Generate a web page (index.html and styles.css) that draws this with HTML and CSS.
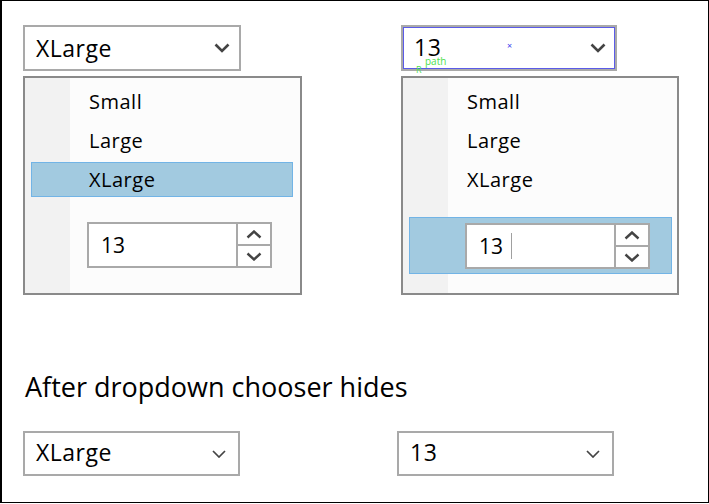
FILE: index.html
```html
<!DOCTYPE html>
<html>
<head>
<meta charset="utf-8">
<link rel="stylesheet" href="styles.css">
</head>
<body>
<div class="frame">
  <div class="top-row">
    <div class="col">
      <div class="combo">
        <span class="combo-text">XLarge</span>
        <svg class="chev" width="16" height="10" viewBox="0 0 16 10"><path d="M1.5 1.5 L8 8 L14.5 1.5" fill="none" stroke="#444" stroke-width="2.6"/></svg>
      </div>
      <div class="popup">
        <div class="item">Small</div>
        <div class="item">Large</div>
        <div class="item selected">XLarge</div>
        <div class="spin-row">
          <div class="spinner">
            <div class="spin-field">13</div>
            <div class="spin-btns">
              <div class="spin-btn"><svg width="16" height="9" viewBox="0 0 16 9"><path d="M1.5 7.5 L8 1.5 L14.5 7.5" fill="none" stroke="#444" stroke-width="2.4"/></svg></div>
              <div class="spin-btn"><svg width="16" height="9" viewBox="0 0 16 9"><path d="M1.5 1.5 L8 7.5 L14.5 1.5" fill="none" stroke="#444" stroke-width="2.4"/></svg></div>
            </div>
          </div>
        </div>
      </div>
    </div>
    <div class="col">
      <div class="combo focused">
        <span class="combo-text">13</span>
        <svg class="chev" width="16" height="10" viewBox="0 0 16 10"><path d="M1.5 1.5 L8 8 L14.5 1.5" fill="none" stroke="#444" stroke-width="2.6"/></svg>
        <span class="dbg-x">×</span>
        <span class="dbg-r">R</span>
      </div>
      <div class="dbg-path">path</div>
      <div class="popup">
        <div class="item">Small</div>
        <div class="item">Large</div>
        <div class="item">XLarge</div>
        <div class="spin-row selected">
          <div class="spinner">
            <div class="spin-field">13<span class="caret"></span></div>
            <div class="spin-btns">
              <div class="spin-btn"><svg width="16" height="9" viewBox="0 0 16 9"><path d="M1.5 7.5 L8 1.5 L14.5 7.5" fill="none" stroke="#444" stroke-width="2.4"/></svg></div>
              <div class="spin-btn"><svg width="16" height="9" viewBox="0 0 16 9"><path d="M1.5 1.5 L8 7.5 L14.5 1.5" fill="none" stroke="#444" stroke-width="2.4"/></svg></div>
            </div>
          </div>
        </div>
      </div>
    </div>
  </div>
  <h1 class="heading">After dropdown chooser hides</h1>
  <div class="bottom-row">
    <div class="combo plain">
      <span class="combo-text">XLarge</span>
      <svg class="chev small" width="14" height="8" viewBox="0 0 14 8"><path d="M1 1 L7 7 L13 1" fill="none" stroke="#444" stroke-width="1.7"/></svg>
    </div>
    <div class="combo plain">
      <span class="combo-text">13</span>
      <svg class="chev small" width="14" height="8" viewBox="0 0 14 8"><path d="M1 1 L7 7 L13 1" fill="none" stroke="#444" stroke-width="1.7"/></svg>
    </div>
  </div>
</div>
</body>
</html>
```

FILE: styles.css
```css
* { box-sizing: border-box; }
html, body { margin: 0; padding: 0; background: #fff; }
body { font-family: "Open Sans", "Noto Sans", sans-serif; color: #000; }

.frame {
  width: 709px;
  height: 503px;
  border: 1px solid #000;
  border-left-width: 2px;
  padding: 24px 0 0 21px;
  background: #fff;
}

.top-row {
  display: flex;
  gap: 99px;
}
.col {
  position: relative;
  display: flex;
  flex-direction: column;
  gap: 5px;
}

.combo {
  position: relative;
  width: 218px;
  height: 46px;
  border: 2px solid #a9a9a9;
  background: #fff;
  display: flex;
  align-items: center;
  justify-content: space-between;
  padding: 0 9px 0 11px;
  font-size: 23px;
}
.col:nth-child(2) .combo { width: 216px; }
.combo.focused { outline: 1px solid #5b5be8; outline-offset: -3px; }
.combo-text { line-height: 1; letter-spacing: 0.5px; }
.focused .combo-text { margin-top: -2px; }
.chev { display: block; }

.dbg-x {
  position: absolute;
  left: 104px;
  top: 12px;
  font-size: 9px;
  color: #3a3aee;
}
.dbg-path {
  position: absolute;
  left: 24px;
  top: 31px;
  font-size: 10px;
  line-height: 10px;
  color: #4de04d;
}
.dbg-r {
  position: absolute;
  left: 13px;
  top: 38px;
  font-size: 9px;
  line-height: 1;
  color: #4de04d;
}

.popup {
  width: 279px;
  height: 219px;
  border: 2px solid #8a8a8a;
  background: linear-gradient(to right, #f2f2f2 0, #f2f2f2 45px, #fcfcfc 45px);
  padding: 6px 7px 0 6px;
  display: flex;
  flex-direction: column;
  gap: 4px;
  font-size: 20px;
}
.col:nth-child(2) .popup { width: 278px; padding-right: 5px; }

.item {
  height: 35px;
  border: 1px solid transparent;
  padding-left: 57px;
  display: flex;
  align-items: center;
  line-height: 1;
  letter-spacing: 0.5px;
}

.spin-row {
  margin-top: 16px;
  height: 57px;
  border: 1px solid transparent;
  padding: 5px 0 0 55px;
}
.col:first-child .spin-row { padding-top: 4px; }

.item.selected,
.spin-row.selected {
  background: #a2cae0;
  border: 1px solid #72b4e6;
}

.spinner {
  width: 185px;
  height: 46px;
  border: 2px solid #a9a9a9;
  background: #fff;
  display: flex;
}
.spin-field {
  flex: 1;
  display: flex;
  align-items: center;
  padding-left: 12px;
  font-size: 21px;
  line-height: 1;
}
.caret {
  display: inline-block;
  width: 1px;
  height: 26px;
  background: #a0a0a0;
  margin-left: 8px;
}
.spin-btns {
  width: 34px;
  border-left: 2px solid #a9a9a9;
  display: flex;
  flex-direction: column;
}
.spin-btn {
  flex: 1;
  display: flex;
  align-items: center;
  justify-content: center;
}
.spin-btn + .spin-btn { border-top: 2px solid #a9a9a9; }
.spin-btn svg { display: block; }

.heading {
  margin: 74px 0 0 2px;
  font-weight: 400;
  font-size: 27px;
  line-height: 36px;
  letter-spacing: 0;
}

.bottom-row {
  display: flex;
  gap: 157px;
  margin-top: 26px;
}
.combo.plain { width: 217px; height: 45px; padding-right: 12px; }
.combo.plain .combo-text { margin-top: -2px; }
```
